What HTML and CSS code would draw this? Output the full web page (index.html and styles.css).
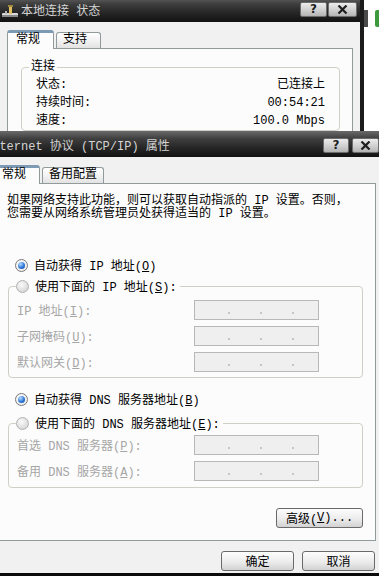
FILE: index.html
```html
<!DOCTYPE html>
<html lang="zh-CN">
<head>
    <meta charset="UTF-8">
    <meta name="viewport" content="width=device-width, initial-scale=1.0">
    <title>Internet 协议 (TCP/IP) 属性</title>
    <link rel="stylesheet" href="styles.css">
</head>
<body>

    <div class="desk">
        <!-- bits of other windows on the right -->
        <div class="peek peek-dark"></div>
        <div class="peek peek-green"></div>

        <!-- Back window: 本地连接 状态 -->
        <div class="win win-back">
            <div class="titlebar">
                <svg class="title-icon" width="16" height="12" viewBox="0 0 16 12">
                    <rect x="0" y="8" width="16" height="3" rx="1" fill="#d9d9d9"/>
                    <rect x="0" y="10" width="16" height="2" fill="#8a8a8a"/>
                    <rect x="7" y="1" width="3" height="8" fill="#e0c060"/>
                    <rect x="6" y="0" width="5" height="2" fill="#a08a40"/>
                    <rect x="3" y="6" width="2" height="3" fill="#b8b8b8"/>
                </svg>
                <span class="title-text">本地连接 状态</span>
                <div class="title-btns">
                    <span class="tbtn tbtn-help">?</span>
                    <span class="tbtn tbtn-close">
                        <svg width="11" height="9" viewBox="0 0 11 9"><path d="M1.5 0.5 L9.5 8.5 M9.5 0.5 L1.5 8.5" stroke="#1e1e1e" stroke-width="2.2"/></svg>
                    </span>
                </div>
            </div>
            <div class="win-body">
                <div class="tabs">
                    <span class="tab active">常规</span>
                    <span class="tab">支持</span>
                </div>
                <div class="panel">
                    <fieldset class="group conn">
                        <legend>连接</legend>
                        <div class="kv"><span>状态:</span><span>已连接上</span></div>
                        <div class="kv"><span>持续时间:</span><span>00:54:21</span></div>
                        <div class="kv"><span>速度:</span><span>100.0 Mbps</span></div>
                    </fieldset>
                </div>
            </div>
        </div>

        <!-- Front window: Internet 协议 (TCP/IP) 属性 -->
        <div class="win win-front">
            <div class="titlebar">
                <span class="title-text">Internet 协议 (TCP/IP) 属性</span>
                <div class="title-btns">
                    <span class="tbtn tbtn-help">?</span>
                    <span class="tbtn tbtn-close">
                        <svg width="11" height="9" viewBox="0 0 11 9"><path d="M1.5 0.5 L9.5 8.5 M9.5 0.5 L1.5 8.5" stroke="#1e1e1e" stroke-width="2.2"/></svg>
                    </span>
                </div>
            </div>
            <div class="win-body">
                <div class="tabs">
                    <span class="tab active">常规</span>
                    <span class="tab">备用配置</span>
                </div>
                <div class="panel ip-panel">
                    <p class="intro">如果网络支持此功能，则可以获取自动指派的 IP 设置。否则，<br>您需要从网络系统管理员处获得适当的 IP 设置。</p>

                    <div class="radio-row auto-ip">
                        <span class="radio on"></span>
                        <span>自动获得 IP 地址(<u>O</u>)</span>
                    </div>

                    <fieldset class="group ip-group">
                        <legend>
                            <span class="radio-row">
                                <span class="radio"></span>
                                <span>使用下面的 IP 地址(<u>S</u>):</span>
                            </span>
                        </legend>
                        <div class="field-row">
                            <span class="field-label">IP 地址(<u>I</u>):</span>
                            <span class="ipbox"><i></i><i></i><i></i></span>
                        </div>
                        <div class="field-row">
                            <span class="field-label">子网掩码(<u>U</u>):</span>
                            <span class="ipbox"><i></i><i></i><i></i></span>
                        </div>
                        <div class="field-row">
                            <span class="field-label">默认网关(<u>D</u>):</span>
                            <span class="ipbox"><i></i><i></i><i></i></span>
                        </div>
                    </fieldset>

                    <div class="radio-row auto-dns">
                        <span class="radio on"></span>
                        <span>自动获得 DNS 服务器地址(<u>B</u>)</span>
                    </div>

                    <fieldset class="group dns-group">
                        <legend>
                            <span class="radio-row">
                                <span class="radio"></span>
                                <span>使用下面的 DNS 服务器地址(<u>E</u>):</span>
                            </span>
                        </legend>
                        <div class="field-row">
                            <span class="field-label">首选 DNS 服务器(<u>P</u>):</span>
                            <span class="ipbox"><i></i><i></i><i></i></span>
                        </div>
                        <div class="field-row">
                            <span class="field-label">备用 DNS 服务器(<u>A</u>):</span>
                            <span class="ipbox"><i></i><i></i><i></i></span>
                        </div>
                    </fieldset>

                    <div class="adv-row">
                        <button class="btn btn-adv">高级(<u>V</u>)...</button>
                    </div>
                </div>

                <div class="footer">
                    <button class="btn btn-dlg">确定</button>
                    <button class="btn btn-dlg">取消</button>
                </div>
            </div>
        </div>
    </div>

</body>
</html>
```

FILE: styles.css
```css
* {
    box-sizing: border-box;
    margin: 0;
    padding: 0;
}

body {
    width: 379px;
    height: 576px;
    overflow: hidden;
    background: #fff;
    font-family: "Liberation Mono", "Noto Sans CJK SC", monospace;
    font-size: 12px;
    color: #000;
}

.desk {
    position: relative;
    width: 379px;
    height: 576px;
    overflow: hidden;
    background: #fff;
}

/* other windows peeking in at the right */
.peek {
    position: absolute;
    top: 10px;
    height: 17px;
}

.peek-dark {
    left: 364px;
    width: 4px;
    background: #4a4a4a;
}

.peek-green {
    left: 375px;
    width: 6px;
    border-radius: 2px;
    background: #3c9a3c;
}

/* Windows */
.win {
    position: absolute;
    overflow: hidden;
    background: #f1f1f1;
}

.win-back {
    top: -4px;
    left: -4px;
    width: 368px;
    height: 140px;
    border-right: 4px solid #1c1c1c;
}

.win-front {
    top: 131px;
    left: -15px;
    width: 401px;
    height: 445px;
    border-bottom: 3px solid #0a0a0a;
}

/* Title bar */
.titlebar {
    height: 26px;
    display: flex;
    align-items: center;
    background: linear-gradient(#6a6a6a, #3e3e3e 30%, #262626 65%, #121212);
    color: #d4d4d4;
    white-space: nowrap;
}

.win-back .titlebar {
    padding-left: 6px;
}

.title-icon {
    margin-top: 4px;
    flex: none;
}

.title-text {
    margin-top: 5px;
    line-height: 14px;
}

.win-back .title-text {
    margin-left: 3px;
}

.title-btns {
    margin-left: auto;
    display: flex;
    gap: 1px;
    margin-right: 3px;
}

.win-front .title-btns {
    gap: 3px;
    margin-right: 7px;
    margin-top: 2px;
}

.tbtn {
    height: 15px;
    width: 27px;
    display: flex;
    align-items: center;
    justify-content: center;
    border: 1px solid #6c6c6c;
    border-radius: 2px;
    background: linear-gradient(#ececec, #cfcfcf 55%, #b4b4b4);
    color: #1e1e1e;
    font-family: "DejaVu Sans", sans-serif;
    font-weight: bold;
    font-size: 12px;
    line-height: 13px;
}

.tbtn-close {
    width: 29px;
}

.win-front .tbtn-help {
    width: 26px;
}

.win-front .tbtn-close {
    width: 27px;
}

/* Body & tabs */
.win-body {
    padding: 8px 7px 0 11px;
}

.win-front .win-body {
    padding: 8px 10px 0 8px;
}

.tabs {
    display: flex;
    align-items: flex-end;
    gap: 2px;
    height: 18px;
}

.tab {
    height: 16px;
    min-width: 45px;
    padding: 0 6px;
    line-height: 15px;
    border: 1px solid #919b9c;
    border-bottom: none;
    border-radius: 3px 3px 0 0;
    background: linear-gradient(#fff, #f0f0f0 60%, #e2e2e2);
    white-space: nowrap;
}

.tab.active {
    position: relative;
    z-index: 1;
    height: 19px;
    min-width: 47px;
    margin-bottom: -1px;
    padding: 0 8px;
    border-top: 3px solid #7d9ab4;
    background: #fcfcfc;
}

.panel {
    border: 1px solid #919b9c;
    background: #fcfcfc;
}

/* Group boxes */
.group {
    min-width: 0;
    border: 1px solid #d0d0c6;
    border-radius: 4px;
}

.group legend {
    padding: 0 3px 0 0;
}

/* Back window group */
.conn {
    margin: 10px 12px 0 13px;
    padding: 1px 14px 0;
}

.conn legend {
    margin-left: -7px;
    padding: 0 2px;
    line-height: 16px;
}

.kv {
    display: flex;
    justify-content: space-between;
    height: 18px;
    line-height: 18px;
}

/* Front window panel */
.ip-panel {
    padding: 0 12px 12px 13px;
}

.intro {
    margin-top: 11px;
    line-height: 13px;
    white-space: nowrap;
}

.radio-row {
    display: flex;
    align-items: center;
    gap: 6px;
    height: 20px;
    white-space: nowrap;
}

.auto-ip {
    margin-top: 34px;
    padding-left: 8px;
}

.auto-dns {
    margin-top: 11px;
    padding-left: 8px;
}

.radio {
    flex: none;
    width: 13px;
    height: 13px;
    border-radius: 50%;
    border: 1px solid #b2b2b2;
    background: radial-gradient(circle at 40% 35%, #fafafa, #dadada 70%, #c8c8c8);
    display: grid;
    place-items: center;
}

.radio.on {
    border-color: #7a7a7a;
    background: radial-gradient(circle at 40% 35%, #fff, #e4e4e4);
}

.radio.on::after {
    content: "";
    width: 7px;
    height: 7px;
    border-radius: 50%;
    background: radial-gradient(circle at 35% 30%, #b6dcff, #2f78d8 55%, #0f4596);
}

.ip-group {
    margin: 1px 0 0 1px;
    padding: 4px 8px 5px;
}

.ip-group legend,
.dns-group legend {
    margin-left: -1px;
}

.dns-group {
    margin: 4px 0 0 1px;
    padding: 2px 8px 6px;
}

.field-row {
    display: flex;
    align-items: center;
    height: 20px;
    color: #a6a6a6;
    white-space: nowrap;
}

.field-row + .field-row {
    margin-top: 6px;
}

.field-label {
    width: 177px;
}

.ipbox {
    width: 125px;
    height: 20px;
    display: flex;
    align-items: flex-end;
    gap: 30px;
    padding: 0 0 5px 33px;
    border: 1px solid #b8b8b8;
    background: #efefef;
}

.ipbox i {
    width: 2px;
    height: 2px;
    background: #c6c6c6;
}

/* Buttons */
.btn {
    height: 20px;
    display: flex;
    align-items: center;
    justify-content: center;
    border: 1px solid #6a6a6a;
    border-radius: 3px;
    background: linear-gradient(#fdfdfd, #ececec 55%, #d2d2d2);
    font: inherit;
    color: #000;
    white-space: nowrap;
}

.adv-row {
    display: flex;
    justify-content: flex-end;
    margin-top: 20px;
}

.btn-adv {
    width: 87px;
}

.footer {
    display: flex;
    justify-content: flex-end;
    gap: 8px;
    padding: 10px 1px 0 0;
}

.btn-dlg {
    width: 73px;
}
```
